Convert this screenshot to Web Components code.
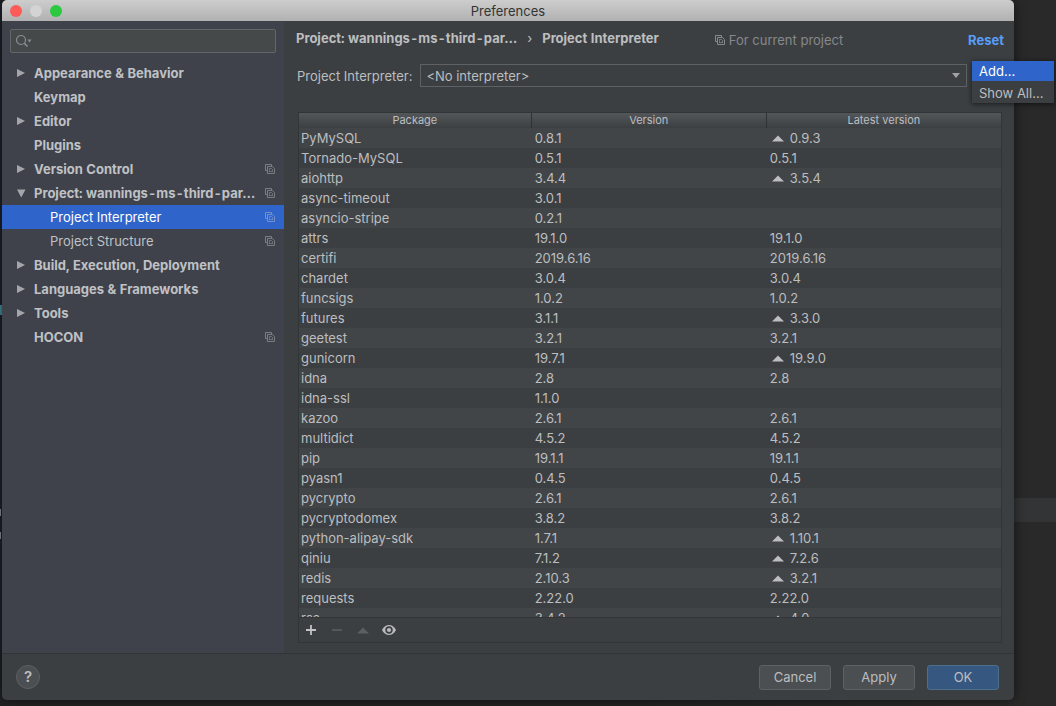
<!DOCTYPE html>
<html lang="en">
<head>
<meta charset="utf-8">
<title>Preferences</title>
<style>
  html, body { margin: 0; height: 100%; }
  body {
    background: #282929;
    color: #bcbec0;
    font: 13px/20px Inter, "Liberation Sans", sans-serif;
    overflow: hidden;
  }
</style>
</head>
<body>
<ide-desktop>
  <prefs-window heading="Preferences">
    <settings-tree slot="sidebar">
      <tree-item state="closed">Appearance &amp; Behavior</tree-item>
      <tree-item>Keymap</tree-item>
      <tree-item state="closed">Editor</tree-item>
      <tree-item>Plugins</tree-item>
      <tree-item state="closed" scoped>Version Control</tree-item>
      <tree-item state="open" scoped>Project: wannings-ms-third-par…</tree-item>
      <tree-item child selected scoped>Project Interpreter</tree-item>
      <tree-item child scoped>Project Structure</tree-item>
      <tree-item state="closed">Build, Execution, Deployment</tree-item>
      <tree-item state="closed">Languages &amp; Frameworks</tree-item>
      <tree-item state="closed">Tools</tree-item>
      <tree-item scoped>HOCON</tree-item>
    </settings-tree>
    <interpreter-page slot="content"></interpreter-page>
    <dialog-footer slot="footer"></dialog-footer>
  </prefs-window>
</ide-desktop>

<script>
const attach = (el, html) => {
  const t = document.createElement('template');
  t.innerHTML = html;
  el.attachShadow({ mode: 'open' }).append(t.content.cloneNode(true));
};

const ICONS = {
  search: [18, 14, '<circle cx="6" cy="6" r="4.5" fill="none" stroke="#8b8e90" stroke-width="1.2"/><path d="M9.3 9.3 12.5 12.5" stroke="#8b8e90" stroke-width="1.6"/><path d="M12.5 5.5h4l-2 3z" fill="#8b8e90"/>'],
  closed: [10, 10, '<path d="M1 1 9 5 1 9z" fill="#a4a6aa"/>'],
  open: [10, 10, '<path d="M1 1.5h8.5L5.25 9.5z" fill="#a4a6aa"/>'],
  scope: [10, 10, '<path d="M2.5 6.5h-2v-6h6v2" fill="none" stroke="currentColor"/><path d="M2.5 2.5h5l2 2v5h-7z" fill="none" stroke="currentColor"/><path d="M4 4.5h3M4.5 5v3M4 7.5h4M7.5 5v3" fill="none" stroke="currentColor" stroke-width=".7"/>'],
  upgrade: [12, 7, '<path d="M0 6.5 6 .5l6 6z" fill="currentColor"/>'],
  drop: [8, 5, '<path d="M0 0h8L4 5z" fill="#a0a2a4"/>'],
  add: [12, 12, '<path d="M6 1v10M1 6h10" stroke="#c0c2c4" stroke-width="1.8"/>'],
  remove: [12, 12, '<path d="M1 6h10" stroke="#5c5f61" stroke-width="1.6"/>'],
  eye: [14, 12, '<path d="M0 6C3.2-.7 10.8-.7 14 6 10.8 12.7 3.2 12.7 0 6z" fill="#b8babc"/><circle cx="7" cy="6" r="3.7" fill="#3c3f41"/><circle cx="7" cy="6" r="2.1" fill="#b8babc"/>']
};
customElements.define('ui-icon', class extends HTMLElement {
  constructor() {
    super();
    const [w, h, body] = ICONS[this.getAttribute('name')];
    attach(this, `<style>:host{display:block;flex:none}svg{display:block}</style>
      <svg width="${w}" height="${h}" viewBox="0 0 ${w} ${h}" aria-hidden="true">${body}</svg>`);
  }
});

customElements.define('ide-desktop', class extends HTMLElement {
  constructor() {
    super();
    attach(this, `<style>
      :host { display: block; box-sizing: border-box; height: 100vh; padding: 0 42px 6px 2px; position: relative; background: linear-gradient(90deg, #1d2229 2px, #202223 2px, #202223 60%, #292929 98%); }
      .line { position: absolute; right: 0; top: 498px; width: 42px; height: 24px; background: #323435; }
      .mark { position: absolute; left: 0; top: 305px; width: 2px; height: 10px; background: #3f8b9c; }
      .glyph { position: absolute; left: 0; width: 1px; height: 7px; background: #8a8d92; }
      .g1 { top: 509px; } .g2 { top: 532px; }
    </style>
    <div class="line"></div><div class="mark"></div><div class="glyph g1"></div><div class="glyph g2"></div>
    <slot></slot>`);
  }
});

customElements.define('prefs-window', class extends HTMLElement {
  constructor() {
    super();
    attach(this, `<style>
      :host { display: flex; flex-direction: column; height: 100%; background: #3c3f41; border-radius: 5px; position: relative; box-shadow: 0 0 12px #0008; }
      header { display: grid; grid-template-columns: 60px 1fr 60px; align-items: center; height: 21px; flex: none; background: linear-gradient(#cdcdcd, #b1b1b1); border-radius: 5px 5px 0 0; color: #343434; }
      .lights { display: flex; gap: 8px; padding-left: 8px; }
      .lights button { width: 12px; height: 12px; padding: 0; border: 0; border-radius: 50%; background: #fc5b57; }
      .lights button:nth-child(2) { background: #d4d4d4; }
      .lights button:nth-child(3) { background: #2bc840; }
      h1 { margin: 0; font: inherit; text-align: center; }
      main { flex: 1; min-height: 0; display: grid; grid-template-columns: 282px minmax(0, 1fr); grid-template-rows: minmax(0, 1fr); }
    </style>
    <header><div class="lights"><button aria-label="Close"></button><button aria-label="Minimize"></button><button aria-label="Zoom"></button></div><h1></h1></header>
    <main><slot name="sidebar"></slot><slot name="content"></slot></main>
    <slot name="footer"></slot>`);
    this.shadowRoot.querySelector('h1').textContent = this.getAttribute('heading');
  }
});

customElements.define('settings-tree', class extends HTMLElement {
  constructor() {
    super();
    attach(this, `<style>
      :host { display: block; background: #3f424b; }
      label { display: flex; align-items: center; box-sizing: border-box; height: 24px; margin: 8px; padding: 0 4px; border: 1px solid #64676a; border-radius: 2px; background: #45494a; }
      input { flex: 1; min-width: 0; border: 0; outline: 0; padding: 0 4px; background: none; color: inherit; font: inherit; }
    </style>
    <label><ui-icon name="search"></ui-icon><input type="text" aria-label="Search settings"></label>
    <nav><slot></slot></nav>`);
  }
});

customElements.define('tree-item', class extends HTMLElement {
  constructor() {
    super();
    const state = this.getAttribute('state');
    attach(this, `<style>
      :host { display: block; }
      a { display: flex; align-items: center; height: 24px; padding: 0 9px 0 14px; color: #bfc1c5; font-weight: 700; font-variant-numeric: tabular-nums; text-decoration: none; white-space: nowrap; }
      .arrow { width: 18px; flex: none; }
      .text { flex: 1; }
      .scope { color: #7b7e84; }
      :host([child]) a { padding-left: 30px; font-weight: 400; }
      :host([selected]) a { background: #2f65ca; color: #fff; }
      :host([selected]) .scope { color: #7391c8; }
    </style>
    <a href="#"><span class="arrow">${state ? `<ui-icon name="${state}"></ui-icon>` : ''}</span><span class="text"><slot></slot></span>${this.hasAttribute('scoped') ? '<ui-icon class="scope" name="scope"></ui-icon>' : ''}</a>`);
  }
});

customElements.define('interpreter-page', class extends HTMLElement {
  constructor() {
    super();
    attach(this, `<style>
      :host { display: flex; flex-direction: column; padding: 0 12px 10px 14px; min-width: 0; }
      .top { display: flex; align-items: center; height: 34px; flex: none; white-space: nowrap; }
      h2 { display: flex; gap: 10px; margin: 0 56px 0 -2px; font: inherit; font-weight: 700; font-variant-numeric: tabular-nums; }
      .sep { font-weight: 400; }
      .note { display: flex; align-items: center; gap: 4px; color: #86898b; flex: 1; padding-top: 4px; }
      .reset { color: #589df6; font-weight: 700; text-decoration: none; margin-right: -2px; padding-top: 4px; }
      .pick { display: flex; align-items: center; gap: 8px; margin: 9px 35px 25px -1px; height: 23px; flex: none; }
      .box { flex: 1; display: grid; align-items: center; }
      .box > * { grid-area: 1 / 1; }
      .box ui-icon { justify-self: end; margin-right: 7px; pointer-events: none; }
      select { appearance: none; box-sizing: border-box; width: 100%; height: 23px; padding: 0 5px; border: 1px solid #5f6264; border-radius: 0; background: #3c3f41; color: inherit; font: inherit; }
      package-table { flex: 1; min-height: 0; }
      action-menu { position: absolute; top: 61px; right: -40px; }
    </style>
    <div class="top">
      <h2><span>Project: wannings-ms-third-par…</span><span class="sep">›</span><span>Project Interpreter</span></h2>
      <span class="note"><ui-icon name="scope"></ui-icon>For current project</span>
      <a class="reset" href="#">Reset</a>
    </div>
    <div class="pick">
      <label for="interpreter">Project Interpreter:</label>
      <div class="box"><select id="interpreter"><option>&lt;No interpreter&gt;</option></select><ui-icon name="drop"></ui-icon></div>
    </div>
    <package-table></package-table>
    <action-menu></action-menu>`);
  }
});

customElements.define('action-menu', class extends HTMLElement {
  constructor() {
    super();
    attach(this, `<style>
      :host { display: flex; flex-direction: column; width: 82px; background: #3c3f41; box-shadow: 0 1px 5px #0009; }
      button { height: 20px; padding: 0 7px; border: 0; background: none; color: inherit; font: inherit; text-align: left; white-space: nowrap; }
      button + button { margin-top: 2px; }
      .on { background: #2f65ca; color: #fff; }
    </style>
    <button class="on">Add...</button><button>Show All...</button>`);
  }
});

const PACKAGES = [
  ['PyMySQL', '0.8.1', '0.9.3', 1], ['Tornado-MySQL', '0.5.1', '0.5.1'], ['aiohttp', '3.4.4', '3.5.4', 1],
  ['async-timeout', '3.0.1', ''], ['asyncio-stripe', '0.2.1', ''], ['attrs', '19.1.0', '19.1.0'],
  ['certifi', '2019.6.16', '2019.6.16'], ['chardet', '3.0.4', '3.0.4'], ['funcsigs', '1.0.2', '1.0.2'],
  ['futures', '3.1.1', '3.3.0', 1], ['geetest', '3.2.1', '3.2.1'], ['gunicorn', '19.7.1', '19.9.0', 1],
  ['idna', '2.8', '2.8'], ['idna-ssl', '1.1.0', ''], ['kazoo', '2.6.1', '2.6.1'],
  ['multidict', '4.5.2', '4.5.2'], ['pip', '19.1.1', '19.1.1'], ['pyasn1', '0.4.5', '0.4.5'],
  ['pycrypto', '2.6.1', '2.6.1'], ['pycryptodomex', '3.8.2', '3.8.2'], ['python-alipay-sdk', '1.7.1', '1.10.1', 1],
  ['qiniu', '7.1.2', '7.2.6', 1], ['redis', '2.10.3', '3.2.1', 1], ['requests', '2.22.0', '2.22.0'],
  ['rsa', '3.4.2', '4.0', 1]
];
customElements.define('package-table', class extends HTMLElement {
  constructor() {
    super();
    const rows = PACKAGES.map(([name, version, latest, up]) =>
      `<tr><td>${name}</td><td>${version}</td><td>${up ? `<span class="up"><ui-icon name="upgrade"></ui-icon>${latest}</span>` : latest}</td></tr>`).join('');
    attach(this, `<style>
      :host { display: flex; flex-direction: column; border: 1px solid #323537; }
      .scroll { flex: 1; min-height: 0; overflow: hidden; }
      table { width: 100%; table-layout: fixed; border-collapse: separate; border-spacing: 0; }
      th { height: 15px; padding: 0; font-size: 11px; line-height: 15px; font-weight: 400; background: linear-gradient(#53575a, #3c3f41); box-sizing: border-box; }
      th:first-child { width: 33%; }
      th + th { border-left: 1px solid #2f3234; }
      td { height: 20px; padding: 0 4px; white-space: nowrap; }
      td:first-child { padding-left: 2px; }
      tr:nth-child(odd) td { background: #414547; }
      .up { display: flex; align-items: center; gap: 6px; padding-left: 2px; }
      .tools { display: flex; align-items: center; gap: 12px; height: 24px; flex: none; padding: 0 5px; border-top: 1px solid #323537; }
      .tools button { display: grid; place-items: center; width: 14px; height: 20px; padding: 0; border: 0; background: none; color: #5c5f61; }
    </style>
    <div class="scroll"><table>
      <thead><tr><th>Package</th><th>Version</th><th>Latest version</th></tr></thead>
      <tbody>${rows}</tbody>
    </table></div>
    <div class="tools">
      <button aria-label="Install"><ui-icon name="add"></ui-icon></button>
      <button aria-label="Uninstall" disabled><ui-icon name="remove"></ui-icon></button>
      <button aria-label="Upgrade" disabled><ui-icon name="upgrade"></ui-icon></button>
      <button aria-label="Show early releases"><ui-icon name="eye"></ui-icon></button>
    </div>`);
  }
});

customElements.define('dialog-footer', class extends HTMLElement {
  constructor() {
    super();
    attach(this, `<style>
      :host { display: flex; align-items: center; gap: 12px; flex: none; height: 46px; padding: 0 15px 0 14px; border-top: 1px solid #323537; }
      button { box-sizing: border-box; width: 72px; height: 25px; padding: 0; border: 1px solid #5e6163; border-radius: 3px; background: #4b4f51; color: inherit; font: inherit; }
      .help { width: 24px; height: 24px; margin-right: auto; border-radius: 50%; font-weight: 600; font-size: 15px; }
      .ok { background: #365880; border-color: #4c708c; }
    </style>
    <button class="help" aria-label="Help">?</button>
    <button>Cancel</button><button>Apply</button><button class="ok">OK</button>`);
  }
});
</script>
</body>
</html>
